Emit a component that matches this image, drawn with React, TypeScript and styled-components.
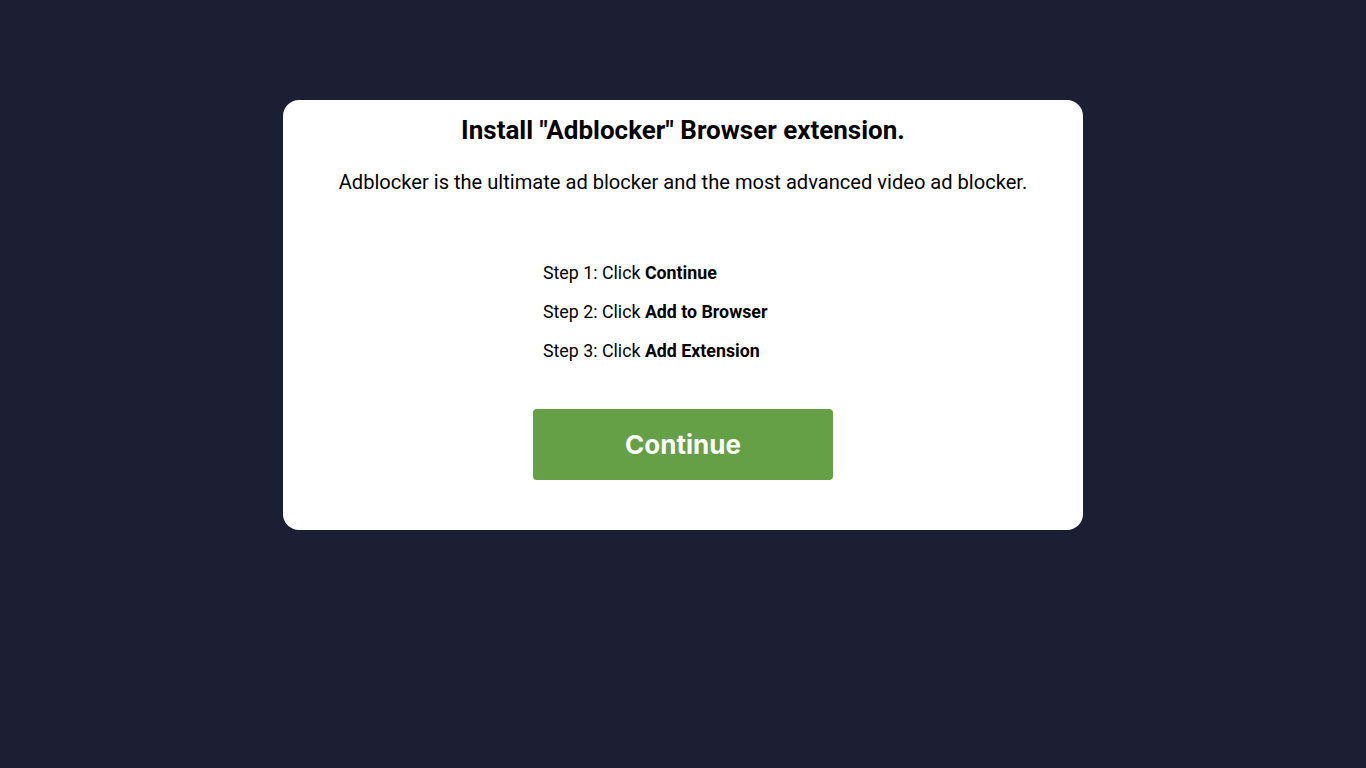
import styled, { createGlobalStyle } from "styled-components";

const GlobalStyle = createGlobalStyle`
  html, body {
    margin: 0;
    padding: 0;
    background: #1c1e33;
  }
  body {
    font-family: Roboto, "Liberation Sans", Arial, sans-serif;
    color: #000;
  }
`;

const Page = styled.div`
  width: 100%;
  min-height: 768px;
  display: flex;
  justify-content: center;
  padding-top: 100px;
  box-sizing: border-box;
`;

const Card = styled.div`
  width: 800px;
  height: 430px;
  box-sizing: border-box;
  background: #fff;
  border-radius: 16px;
  padding: 14px 0 0;
  display: flex;
  flex-direction: column;
  align-items: center;
`;

const Title = styled.h1`
  margin: 0;
  font-size: 26px;
  line-height: 32px;
  font-weight: 700;
  text-align: center;
`;

const Lead = styled.p`
  margin: 24px 0 0;
  font-size: 20.1px;
  line-height: 24px;
  text-align: center;
`;

const Steps = styled.ul`
  list-style: none;
  margin: 68px 0 0;
  padding: 0;
  width: 280px;
  display: flex;
  flex-direction: column;
  gap: 17px;
`;

const Step = styled.li`
  font-size: 17.8px;
  line-height: 22px;

  b {
    font-weight: 700;
  }
`;

const ContinueButton = styled.button`
  margin-top: 47px;
  width: 300px;
  height: 71px;
  border: none;
  border-radius: 4px;
  background: #65a046;
  color: #fff;
  font-family: Inter, Roboto, sans-serif;
  font-size: 26px;
  font-weight: 700;
  cursor: pointer;
`;

const steps = [
  { label: "Step 1: Click", action: "Continue" },
  { label: "Step 2: Click", action: "Add to Browser" },
  { label: "Step 3: Click", action: "Add Extension" },
];

export default function App() {
  return (
    <>
      <GlobalStyle />
      <Page>
        <Card>
          <Title>Install "Adblocker" Browser extension.</Title>
          <Lead>Adblocker is the ultimate ad blocker and the most advanced video ad blocker.</Lead>
          <Steps>
            {steps.map((s) => (
              <Step key={s.action}>
                {s.label} <b>{s.action}</b>
              </Step>
            ))}
          </Steps>
          <ContinueButton>Continue</ContinueButton>
        </Card>
      </Page>
    </>
  );
}
